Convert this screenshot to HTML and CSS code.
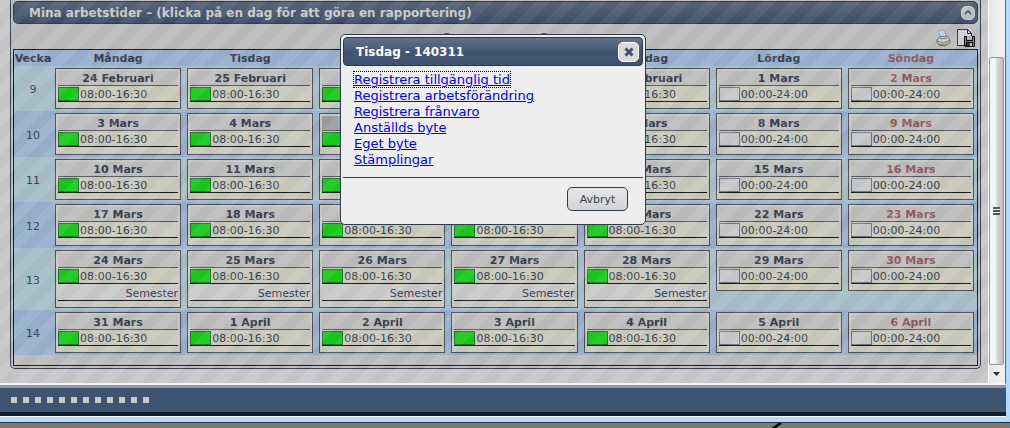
FILE: index.html
```
<!DOCTYPE html>
<html lang="sv">
<head>
<meta charset="utf-8">
<title>Mina arbetstider</title>
<link rel="stylesheet" href="styles.css">
</head>
<body>
<div class="window">
  <div class="viewport">
    <main class="page">
      <section class="panel">
        <header class="panel-header">
          <h1 class="panel-title">Mina arbetstider – (klicka på en dag för att göra en rapportering)</h1>
          <button class="collapse" type="button" aria-label="Fäll ihop">
            <svg width="8" height="5" viewBox="0 0 8 5"><path d="M1 4 4 1l3 3" fill="none" stroke="#3f546f" stroke-width="1.6"/></svg>
          </button>
        </header>
        <div class="toolbar">
          <div class="pager">
            <button class="page-step" type="button" aria-label="Föregående"></button>
            <button class="page-step" type="button" aria-label="Nästa"></button>
          </div>
          <div class="tools">
          <button class="tool" type="button" aria-label="Skriv ut">
            <svg width="15" height="18" viewBox="0 0 15 18">
              <path d="M2 2l6-1 3 7-6 1z" fill="#b9d6ee" stroke="#8695a2" stroke-width=".8"/>
              <path d="M1 11l3-3 7-1 3 4v3l-5 3-6-1-2-3z" fill="#d3d3d1" stroke="#666" stroke-width=".9"/>
              <path d="M1 12l7 2 6-3M3 15l6 1 4-3" fill="none" stroke="#5c5c5c" stroke-width=".8"/>
              <path d="M4 10l7-1" stroke="#777" stroke-width="1"/>
              <path d="M10 14l2-1" stroke="#c9bd55" stroke-width="1"/>
            </svg>
          </button>
          <button class="tool" type="button" aria-label="Spara">
            <svg width="18" height="18" viewBox="0 0 18 18">
              <path d="M.5.5h10l4 4v12H.5z" fill="#d0d0d0" stroke="#333"/>
              <path d="M10.500.5v4h4M10.500.5l4 4v3" fill="#eee" stroke="#14148c"/>
              <path d="M7 7h11v11H8l-1-1z" fill="#111"/>
              <path d="M8 8h1v8H8zM16 8h1v9h-1zM9 12h7v1H9z" fill="#8c8a1c"/>
              <path d="M10 7h5v4h-5z" fill="#b4b4b4"/>
              <path d="M10 14h5v3h-5z" fill="#333"/><path d="M13 14h2v3h-2z" fill="#ccc"/>
            </svg>
          </button>
          </div>
        </div>
        <div class="schedule">
          <table class="calendar">
            <thead>
              <tr><th class="week">Vecka</th><th>Måndag</th><th>Tisdag</th><th>Onsdag</th><th>Torsdag</th><th>Fredag</th><th>Lördag</th><th class="sunday">Söndag</th></tr>
            </thead>
            <tbody id="weeks"></tbody>
          </table>
        </div>
      </section>
    </main>
    <div class="scrollbar" aria-hidden="true">
      <div class="thumb"><i class="grip"></i></div>
      <div class="arrow"><svg width="7" height="4" viewBox="0 0 7 4"><path d="M0 0h7L3.500 4z" fill="#333"/></svg></div>
    </div>
  </div>
  <footer class="taskbar">
    <i class="dot"></i><i class="dot"></i><i class="dot"></i><i class="dot"></i><i class="dot"></i><i class="dot"></i><i class="dot"></i><i class="dot"></i><i class="dot"></i><i class="dot"></i><i class="dot"></i><i class="dot"></i>
  </footer>
</div>
<div class="desktop"><svg width="40" height="6" viewBox="0 0 40 6"><path d="M2 6 11 0" stroke="#000" stroke-width="2.500"/></svg></div>

<div class="dialog" role="dialog" aria-labelledby="dialog-title">
  <header class="dialog-header">
    <h2 class="dialog-title" id="dialog-title">Tisdag - 140311</h2>
    <button class="close" type="button" aria-label="Stäng">
      <svg width="10" height="10" viewBox="0 0 10 10"><path d="M1.500 1.500l7 7M8.500 1.500l-7 7" stroke="#3f546f" stroke-width="3"/></svg>
    </button>
  </header>
  <ul class="links">
    <li><a class="focused" href="#tid">Registrera tillgänglig tid</a></li>
    <li><a href="#forandring">Registrera arbetsförändring</a></li>
    <li><a href="#franvaro">Registrera frånvaro</a></li>
    <li><a href="#anstalld">Anställds byte</a></li>
    <li><a href="#eget">Eget byte</a></li>
    <li><a href="#stamplingar">Stämplingar</a></li>
  </ul>
  <div class="dialog-actions"><button class="cancel" type="button">Avbryt</button></div>
</div>
<script src="calendar.js"></script>
</body>
</html>
```
FILE: calendar.js
```
const start = new Date(2014, 1, 24);
const months = { 1: "Februari", 2: "Mars", 3: "April" };
const body = document.getElementById("weeks");
for (let week = 9; week <= 14; week++) {
  const row = body.insertRow();
  const label = row.insertCell();
  label.className = "week";
  label.textContent = week;
  for (let day = 0; day < 7; day++) {
    const date = new Date(start);
    date.setDate(start.getDate() + (week - 9) * 7 + day);
    const free = day > 4;
    const today = week === 10 && day === 2;
    const cell = row.insertCell();
    if (day === 6) cell.className = "sunday";
    cell.innerHTML = `<div class="day${today ? " today" : ""}">
      <div class="date">${date.getDate()} ${months[date.getMonth()]}</div>
      <div class="shift"><i class="swatch${free ? " free" : ""}"></i>${free ? "00:00-24:00" : "08:00-16:30"}</div>
      ${week === 13 && !free ? '<div class="note">Semester</div>' : ""}
    </div>`;
  }
}
```
FILE: styles.css
```
* { box-sizing: border-box; }
body {
  margin: 0;
  min-height: 100vh;
  display: flex;
  flex-direction: column;
  position: relative;
  overflow: hidden;
  background: #7d7b79;
  color: #363f4d;
  font-family: Verdana, "DejaVu Sans", sans-serif;
  font-size: 11px;
}
button { padding: 0; font: inherit; color: inherit; }
svg { display: block; }
.window {
  background: #b5d9fb;
  border-bottom: 1px solid #25303a;
  padding: 0 4px 6px 0;
}
.viewport {
  display: flex;
  border-right: 1px solid #52657d;
  border-bottom: 2px solid #f4f4f4;
  background: #f0f0f0;
}
.page {
  flex: 1;
  position: relative;
  background: #c8c8c8;
  padding: 0 7px 14px 10px;
}
.page::after {
  content: "";
  position: absolute;
  inset: 0;
  pointer-events: none;
  background: repeating-linear-gradient(135deg, rgba(255,255,255,.05) 0 10px, rgba(0,0,0,.02) 10px 20px);
}
.panel {
  background: #bdbdbd;
  border: 1px solid #363f4f;
  border-top: 0;
  border-radius: 0 0 5px 5px;
  padding: 1px 2px 2px;
}
.panel-header {
  display: flex;
  align-items: center;
  justify-content: space-between;
  height: 23px;
  padding: 0 2px 0 15px;
  border: 1px solid #2f3b4a;
  border-radius: 5px;
  background: linear-gradient(#576579, #3e4f67);
  color: #cbcbcb;
}
.panel-title { margin: 0; font-size: 12px; line-height: 16px; }
.collapse {
  display: grid;
  place-items: center;
  width: 14px;
  height: 14px;
  border: 1px solid #cfcfcf;
  border-radius: 5px;
  background: #bfc1c3;
}
.toolbar {
  display: grid;
  grid-template-columns: 1fr auto 1fr;
  height: 25px;
  padding: 5px 3px 0;
}
.pager { grid-column: 2; display: flex; gap: 85px; padding-top: 4px; }
.page-step { width: 12px; height: 12px; border: 0; border-radius: 6px; background: #3a3f47; }
.tools { display: flex; justify-content: flex-end; gap: 6px; }
.tool { border: 0; background: none; height: 18px; }
.schedule { border: 1px solid #14161a; padding-bottom: 10px; }
.calendar { width: 100%; table-layout: fixed; border-collapse: collapse; }
.calendar th { height: 16px; padding: 1px 0 0; line-height: 15px; background: #99b0ce; }
.calendar .week { width: 38px; text-align: center; white-space: nowrap; }
.calendar .sunday { color: #8d5a5e; }
.calendar td { padding: 2px 3px; background: #a7bfca; vertical-align: top; }
.calendar td.week { padding: 2px 0 0; vertical-align: middle; }
.calendar tr:nth-child(even) td { background: #99b0ce; }
.day {
  border: 1px solid #4d4d5a;
  background: #cac9bd;
  padding: 2px 2px 6px;
}
tr:nth-child(even) .day { padding-bottom: 7px; }
tr:last-child .day { padding-bottom: 6px; }
.date {
  height: 15px;
  line-height: 16px;
  border-bottom: 1px solid #555662;
  background: #bebebe;
  font-weight: bold;
  text-align: center;
}
.today .date { background: #9f9f9f; }
.shift {
  display: flex;
  align-items: flex-end;
  gap: 1px;
  height: 16px;
  line-height: 13px;
  border-bottom: 1px solid #151515;
  color: #363f4d;
}
.swatch { width: 21px; height: 14px; border: 1px solid #2c7035; background: #17cb1b; }
.swatch.free { border-color: #70757c; background: #c8c8ca; }
.note {
  height: 17px;
  line-height: 20px;
  border-bottom: 1px solid #151515;
  background: #cacaca;
  text-align: right;
}
.scrollbar {
  display: flex;
  flex-direction: column;
  width: 17px;
  padding: 57px 1px 0 0;
  border-left: 1px solid #fff;
  background: linear-gradient(90deg, #e6e6e6, #f3f3f3);
}
.thumb {
  flex: 1;
  display: grid;
  place-items: center;
  border: 1px solid #97979b;
  border-radius: 2px;
  background: linear-gradient(90deg, #f6f6f6 0 35%, #d5d5d8 60%, #bcbcc2);
}
.grip { width: 7px; height: 8px; background: repeating-linear-gradient(#555 0 2px, #eee 2px 3px); }
.arrow { display: grid; place-items: center; height: 18px; }
.taskbar {
  display: flex;
  align-items: center;
  gap: 6px;
  height: 31px;
  padding: 0 11px;
  border-top: 3px solid #8d99a9;
  border-bottom: 4px solid #0f1d30;
  background: #3f546f;
  box-shadow: 0 1px #f4faff;
}
.dot { width: 6px; height: 6px; background: #cacaca; }
.desktop { flex: 1; display: flex; justify-content: flex-end; padding-right: 200px; min-height: 5px; }
.dialog {
  position: absolute;
  top: 34px;
  left: 50%;
  width: 306px;
  margin-left: -165px;
  padding: 2px;
  border: 1px solid #2f3b4a;
  border-radius: 5px;
  background: #eee;
}
.dialog-header {
  display: flex;
  align-items: center;
  justify-content: space-between;
  height: 29px;
  padding: 0 3px 0 12px;
  border: 1px solid #2f3b4a;
  border-radius: 4px;
  background: linear-gradient(#64738a, #435773 50%, #3e526e);
  color: #fff;
}
.dialog-title { margin: 0; font-size: 12px; }
.close {
  display: grid;
  place-items: center;
  width: 21px;
  height: 20px;
  border: 1px solid #fff;
  border-radius: 5px;
  background: #d8dadc;
}
.links {
  margin: 0;
  padding: 6px 11px 9px;
  list-style: none;
  font-size: 13px;
  line-height: 16px;
}
.links a { color: #00f; text-decoration: underline; }
.links .focused { outline: 1px dotted #000; }
.dialog-actions {
  display: flex;
  justify-content: flex-end;
  padding: 9px 15px 11px;
  border-top: 1px solid #2f3b4a;
}
.cancel {
  width: 61px;
  height: 24px;
  border: 1px solid #2f3b4a;
  border-radius: 5px;
  background: linear-gradient(#e5e6e7, #d2d3d5);
}
```
